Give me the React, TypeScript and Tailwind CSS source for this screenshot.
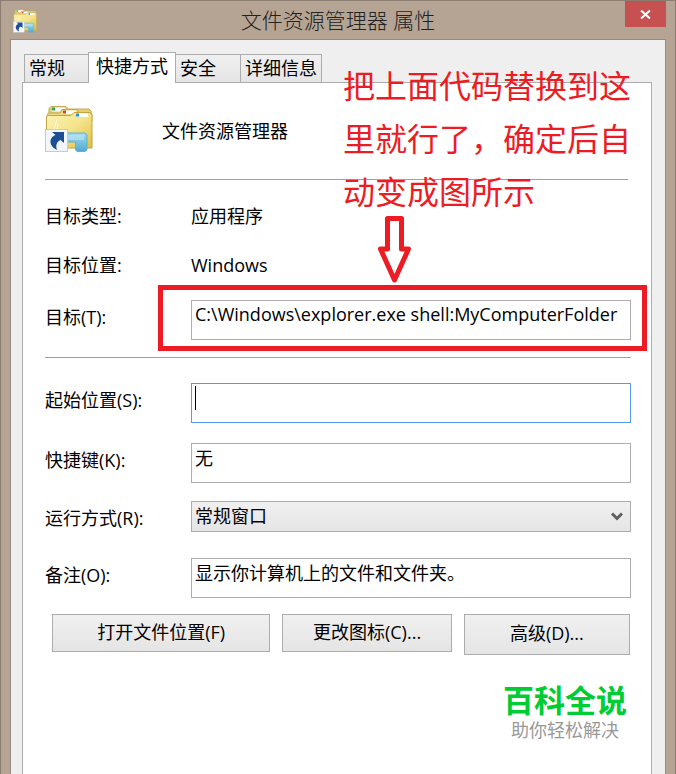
import { useState } from 'react';
import type { ReactNode } from 'react';

const tabs = [
  { name: '常规', width: 'w-[65px]' },
  { name: '快捷方式', width: 'w-[88px]' },
  { name: '安全', width: 'w-[66px]' },
  { name: '详细信息', width: 'w-[82px]' },
];

const field = 'block w-full h-10 border border-[#abadb3] bg-white px-[3px] pb-3 outline-none';
const button = 'border border-[#acacac] bg-linear-to-b from-[#f0f0f0] to-[#e5e5e5] pb-0.5 text-center';

function FolderIcon({ className }: { className: string }) {
  return (
    <svg className={className} viewBox="0 0 48 48" aria-hidden="true">
      <defs>
        <linearGradient id="folder" x1="0" y1="0" x2="1" y2="1">
          <stop offset="0" stopColor="#fbf3b4" />
          <stop offset="0.5" stopColor="#f4e48c" />
          <stop offset="1" stopColor="#e3bd3c" />
        </linearGradient>
        <linearGradient id="stand" x1="0" y1="0" x2="0" y2="1">
          <stop offset="0" stopColor="#a5dcee" />
          <stop offset="1" stopColor="#4fa9d3" />
        </linearGradient>
      </defs>
      <path d="M4 10V3.5L6 1.5H21L23.5 4H44L46 6V14H4Z" fill="#e6cf76" stroke="#c3a850" />
      <rect x="7" y="2.5" width="13" height="4" fill="#fff" />
      <rect x="7" y="2.5" width="3" height="3" fill="#36a853" />
      <path d="M2 14V9.5L4 8H15L17 4.5H32L34 7.5H45.5L47 9V16H2Z" fill="#ecd886" stroke="#c3a850" />
      <rect x="18" y="5.5" width="13" height="3.5" fill="#fff" />
      <rect x="18" y="5.5" width="3" height="3" fill="#e23f26" />
      <path d="M1.5 43V12L3 10.5H26L29 7.5H45L47 10V43Z" fill="url(#folder)" stroke="#c3a445" />
      <rect x="31" y="8.5" width="12" height="3.5" fill="#fff" />
      <rect x="31" y="8.5" width="3" height="3" fill="#2a8fd0" />
      <path d="M9 24L12 15M12 24L13 19" stroke="#fffbe0" strokeWidth="1" fill="none" />
      <path d="M20 28H40L42 30V45L40 46.5H32L30.5 45V37H20Z" fill="url(#stand)" stroke="#5fb2d2" />
      <path d="M22 30H39V35H22Z" fill="#c5ebf4" opacity="0.5" />
      <rect x="0.5" y="24.5" width="22" height="22" fill="#f2f6fa" stroke="#c7cbcf" />
      <path d="M7 27H19V38L15.5 35C11.5 37 10.5 40 12 45C6 42 4 37 6.5 33C7.5 31.5 9 30.5 10.5 30Z" fill="#1d4f94" />
    </svg>
  );
}

function Row({ label, htmlFor, className, children }: { label: string; htmlFor?: string; className: string; children: ReactNode }) {
  return (
    <div className={`flex items-start ${className}`}>
      {htmlFor ? (
        <label htmlFor={htmlFor} className="w-[146px] shrink-0 leading-[34px]">{label}</label>
      ) : (
        <span className="w-[146px] shrink-0 leading-9">{label}</span>
      )}
      <div className="relative min-w-0 flex-1">{children}</div>
    </div>
  );
}

export default function App() {
  const [active, setActive] = useState('快捷方式');
  const [target, setTarget] = useState('C:\\Windows\\explorer.exe shell:MyComputerFolder');
  const [startIn, setStartIn] = useState('');

  return (
    <div className="flex h-screen min-w-[676px] flex-col overflow-hidden border border-b-0 border-[#8b7d70] bg-[#b5a493] font-['Open_Sans','Noto_Sans_CJK_SC',sans-serif] text-[18px] text-black">
      <header className="relative flex h-[38px] shrink-0 items-center justify-center">
        <FolderIcon className="absolute left-3 top-2 h-6 w-6" />
        <h1 className="text-[21px] font-light leading-8 text-[#222]">文件资源管理器 属性</h1>
        <button aria-label="关闭" className="absolute right-[9px] top-0 flex h-[26px] w-[41px] items-center justify-center bg-[#c75050]">
          <svg className="h-[9px] w-[11px]" viewBox="0 0 11 9" aria-hidden="true">
            <path d="M1 0.5L10 8.5M10 0.5L1 8.5" stroke="#fff" strokeWidth="2" />
          </svg>
        </button>
      </header>

      <main className="mx-[9px] flex flex-1 flex-col border border-b-0 border-[#988a7c] bg-[#efefef] pl-[11px] pr-[13px] pt-3">
        <div role="tablist" className="relative z-10 -mb-px flex h-[31px] items-end pl-0.5">
          {tabs.map((tab) => (
            <button
              key={tab.name}
              role="tab"
              aria-selected={active === tab.name}
              onClick={() => setActive(tab.name)}
              className={`-mr-px whitespace-nowrap border border-[#acacac] text-left ${tab.width} ${
                active === tab.name
                  ? 'h-[31px] border-b-0 bg-white pb-1 pl-[7px]'
                  : 'h-[29px] bg-linear-to-b from-[#f0f0f0] to-[#e5e5e5] pb-0.5 pl-1'
              }`}
            >
              {tab.name}
            </button>
          ))}
        </div>

        <section className="relative flex-1 border border-b-0 border-[#acacac] bg-white pl-[22px] pr-5">
          <div className="flex h-24 items-center">
            <FolderIcon className="mb-1 h-[50px] w-12" />
            <span className="ml-[69px]">文件资源管理器</span>
          </div>
          <hr className="mr-[3px] border-[#a0a0a0]" />

          <Row label="目标类型:" className="mt-[18px]">
            <span className="leading-9">应用程序</span>
          </Row>
          <Row label="目标位置:" className="mt-[13px]">
            <span className="leading-9">Windows</span>
          </Row>
          <Row label="目标(T):" htmlFor="target" className="mt-[17px]">
            <input id="target" value={target} onChange={(e) => setTarget(e.target.value)} className={field} />
            <div className="pointer-events-none absolute -bottom-[11px] -left-[33px] -right-4 -top-[15px] border-5 border-[#ed1c24]" />
          </Row>
          <hr className="mt-[17px] border-[#a0a0a0]" />

          <Row label="起始位置(S):" htmlFor="start" className="mt-[25px]">
            <input id="start" value={startIn} onChange={(e) => setStartIn(e.target.value)} className="block h-10 w-full border border-[#569de5] bg-white px-[3px] pb-3 outline-none" />
            {startIn === '' && <span className="pointer-events-none absolute left-1 top-[3px] h-6 w-px bg-black" />}
          </Row>
          <Row label="快捷键(K):" htmlFor="hotkey" className="mt-5">
            <input id="hotkey" defaultValue="无" className={field} />
          </Row>
          <Row label="运行方式(R):" htmlFor="run" className="mt-[18px]">
            <select id="run" className="block h-[31px] w-full appearance-none border border-[#acacac] bg-linear-to-b from-[#f0f0f0] to-[#e5e5e5] px-[3px] outline-none">
              <option>常规窗口</option>
              <option>最小化</option>
              <option>最大化</option>
            </select>
            <svg className="pointer-events-none absolute right-2 top-[11px] h-[9px] w-3" viewBox="0 0 12 9" aria-hidden="true">
              <path d="M1 1.5L6 6.5L11 1.5" stroke="#606060" strokeWidth="3" fill="none" />
            </svg>
          </Row>
          <Row label="备注(O):" htmlFor="comment" className="mt-[23px]">
            <input id="comment" defaultValue="显示你计算机上的文件和文件夹。" className={field} />
          </Row>

          <div className="ml-[7px] mr-px mt-4 grid grid-cols-[218fr_169fr_166fr] items-start gap-3">
            <button className={`${button} h-[38px]`}>打开文件位置(F)</button>
            <button className={`${button} h-[38px]`}>更改图标(C)...</button>
            <button className={`${button} h-[41px]`}>高级(D)...</button>
          </div>

          <div className="ml-auto mr-1 mt-[27px] w-fit text-center">
            <p className="text-[31px] font-bold leading-9 text-[#00cc33]">百科全说</p>
            <p className="leading-6 text-[#999]">助你轻松解决</p>
          </div>

          {/* red note and the arrow down to the target box */}
          <div className="pointer-events-none absolute right-5 -top-6 w-72 text-[#ed1c24]">
            <p className="text-[32px] leading-[53px]">把上面代码替换到这里就行了，确定后自动变成图所示</p>
            <svg className="-mt-0.5 ml-[35px] h-[68px] w-[33px]" viewBox="0 0 33 68" aria-hidden="true">
              <path d="M9.5 2.5H23.5V33H30.5L16.5 64L2.5 33H9.5Z" stroke="currentColor" strokeWidth="5" strokeLinejoin="round" fill="#fff" />
            </svg>
          </div>
        </section>
      </main>
    </div>
  );
}
